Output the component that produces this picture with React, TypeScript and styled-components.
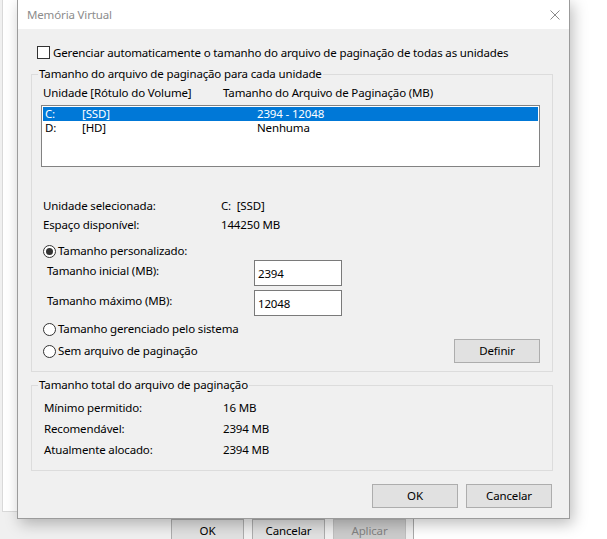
import React from "react";
import styled, { createGlobalStyle } from "styled-components";

const Global = createGlobalStyle`
  html, body { margin: 0; padding: 0; background: #ffffff; overflow: hidden; }
  body {
    font-family: "Noto Sans", "Liberation Sans", sans-serif;
    font-size: 11.5px;
    letter-spacing: -0.15px;
    line-height: 16px;
    color: #000;
  }
  * { box-sizing: border-box; }
`;

const Desktop = styled.div`
  position: relative;
  width: 607px;
  height: 539px;
  overflow: hidden;
  background: #ffffff;
`;

/* ---------- parent window (behind) ---------- */
const ParentWindow = styled.div`
  position: absolute;
  left: 0;
  top: -40px;
  width: 414px;
  height: 620px;
  background: #f0f0f0;
  border-right: 1px solid #a9a9a9;
  display: flex;
  flex-direction: column;
  padding: 0 7px 0 2px;
`;

const TabPanel = styled.div`
  height: 552px;
  background: #ffffff;
  border: 1px solid #d9d9d9;
`;

const ParentButtons = styled.div`
  display: flex;
  justify-content: flex-end;
  gap: 8px;
  margin-top: 7px;
`;

const WinButton = styled.div<{ $w: number; $disabled?: boolean }>`
  width: ${(p) => p.$w}px;
  height: 24px;
  display: flex;
  align-items: center;
  justify-content: center;
  background: ${(p) => (p.$disabled ? "#cccccc" : "#e1e1e1")};
  border: 1px solid ${(p) => (p.$disabled ? "#bfbfbf" : "#adadad")};
  color: ${(p) => (p.$disabled ? "#838383" : "#000")};
`;

/* ---------- dialog ---------- */
const Dialog = styled.div`
  position: absolute;
  left: 17px;
  top: -1px;
  width: 553px;
  border: 1px solid #9b9b9b;
  background: #f0f0f0;
  box-shadow: 3px 5px 14px rgba(0, 0, 0, 0.26);
  display: flex;
  flex-direction: column;
`;

const TitleBar = styled.div`
  height: 29px;
  background: #ffffff;
  display: flex;
  align-items: center;
  justify-content: space-between;
  padding: 0 9px 0 9px;
`;

const TitleText = styled.span`
  color: #8c8c8c;
`;

const Body = styled.div`
  display: flex;
  flex-direction: column;
  padding: 17px 16px 10px 13px;
`;

const CheckRow = styled.div`
  display: flex;
  align-items: center;
  gap: 3px;
  height: 13px;
  padding-left: 6px;
`;

const CheckBox = styled.span`
  width: 13px;
  height: 13px;
  border: 1px solid #333333;
  background: #ffffff;
  flex: none;
`;

const Group = styled.fieldset<{ $top: number; $pl: number; $pt: number; $pb: number }>`
  margin: ${(p) => p.$top}px 0 0 0;
  padding: ${(p) => p.$pt}px 12px ${(p) => p.$pb}px ${(p) => p.$pl}px;
  border: 1px solid #dcdcdc;
  min-width: 0;
`;

const Legend = styled.legend<{ $ml: number }>`
  padding: 0 1px;
  margin-left: ${(p) => p.$ml}px;
  line-height: 16px;
`;

const HeaderRow = styled.div`
  display: grid;
  grid-template-columns: 180px 1fr;
  padding-left: 2px;
  margin-top: 3px;
`;

const ListBox = styled.div`
  margin-top: 4px;
  height: 62px;
  border: 1px solid #828282;
  background: #ffffff;
  padding: 1px;
`;

const ListRow = styled.div<{ $selected?: boolean }>`
  height: 14px;
  line-height: 14px;
  display: grid;
  grid-template-columns: 37px 175px 1fr;
  padding-left: 2px;
  overflow: hidden;
  background: ${(p) => (p.$selected ? "#0078d7" : "transparent")};
  color: ${(p) => (p.$selected ? "#ffffff" : "#000")};
`;

const InfoGrid = styled.div<{ $top: number; $col: number; $gap: number; $pl: number }>`
  display: grid;
  grid-template-columns: ${(p) => p.$col}px 1fr;
  row-gap: ${(p) => p.$gap}px;
  margin-top: ${(p) => p.$top}px;
  padding-left: ${(p) => p.$pl}px;
`;

const RadioRow = styled.div<{ $top: number }>`
  display: flex;
  align-items: center;
  gap: 2px;
  height: 16px;
  margin-top: ${(p) => p.$top}px;
  padding-left: 2px;
`;

const Radio = styled.span<{ $checked?: boolean }>`
  width: 13px;
  height: 13px;
  border: 1px solid #333333;
  border-radius: 50%;
  background: #ffffff;
  flex: none;
  display: flex;
  align-items: center;
  justify-content: center;
  &::after {
    content: "";
    width: 7px;
    height: 7px;
    border-radius: 50%;
    background: ${(p) => (p.$checked ? "#333333" : "transparent")};
  }
`;

const SizeGrid = styled.div`
  display: grid;
  grid-template-columns: 207px 88px;
  grid-auto-rows: 26px;
  row-gap: 4px;
  margin-top: 1px;
  padding-left: 6px;
  align-items: center;
`;

const SizeLabel = styled.span`
  padding-bottom: 4px;
`;

const TextField = styled.input`
  width: 88px;
  height: 26px;
  border: 1px solid #7a7a7a;
  background: #ffffff;
  padding: 0 0 0 3px;
  margin: 0;
  font: inherit;
  letter-spacing: inherit;
  color: #000;
  outline: none;
`;

const LastRow = styled.div`
  display: flex;
  align-items: center;
  justify-content: space-between;
  height: 24px;
  margin-top: 2px;
`;

const ButtonRow = styled.div`
  display: flex;
  justify-content: flex-end;
  gap: 8px;
  margin-top: 13px;
  padding-right: 1px;
`;

const CloseIcon = () => (
  <svg width="10" height="10" viewBox="0 0 10 10">
    <path d="M0.5 0.5 L9.5 9.5 M9.5 0.5 L0.5 9.5" stroke="#8a8a8a" strokeWidth="1" fill="none" />
  </svg>
);

export default function App() {
  return (
    <Desktop>
      <Global />
      <ParentWindow>
        <TabPanel />
        <ParentButtons>
          <WinButton $w={73}>OK</WinButton>
          <WinButton $w={73}>Cancelar</WinButton>
          <WinButton $w={73} $disabled>
            Aplicar
          </WinButton>
        </ParentButtons>
      </ParentWindow>

      <Dialog>
        <TitleBar>
          <TitleText>Memória Virtual</TitleText>
          <CloseIcon />
        </TitleBar>
        <Body>
          <CheckRow>
            <CheckBox />
            <span>Gerenciar automaticamente o tamanho do arquivo de paginação de todas as unidades</span>
          </CheckRow>

          <Group $top={7} $pl={9} $pt={0} $pb={8}>
            <Legend $ml={-3}>Tamanho do arquivo de paginação para cada unidade</Legend>
            <HeaderRow>
              <span>Unidade [Rótulo do Volume]</span>
              <span>Tamanho do Arquivo de Paginação (MB)</span>
            </HeaderRow>
            <ListBox>
              <ListRow $selected>
                <span>C:</span>
                <span>[SSD]</span>
                <span>2394 - 12048</span>
              </ListRow>
              <ListRow>
                <span>D:</span>
                <span>[HD]</span>
                <span>Nenhuma</span>
              </ListRow>
            </ListBox>

            <InfoGrid $top={31} $col={178} $gap={3} $pl={2}>
              <span>Unidade selecionada:</span>
              <span>C:&nbsp; [SSD]</span>
              <span>Espaço disponível:</span>
              <span>144250 MB</span>
            </InfoGrid>

            <RadioRow $top={10}>
              <Radio $checked />
              <span>Tamanho personalizado:</span>
            </RadioRow>

            <SizeGrid>
              <SizeLabel>Tamanho inicial (MB):</SizeLabel>
              <TextField readOnly value="2394" />
              <SizeLabel>Tamanho máximo (MB):</SizeLabel>
              <TextField readOnly value="12048" />
            </SizeGrid>

            <RadioRow $top={5}>
              <Radio />
              <span>Tamanho gerenciado pelo sistema</span>
            </RadioRow>

            <LastRow>
              <RadioRow $top={0}>
                <Radio />
                <span>Sem arquivo de paginação</span>
              </RadioRow>
              <WinButton $w={86}>Definir</WinButton>
            </LastRow>
          </Group>

          <Group $top={5} $pl={12} $pt={7} $pb={12}>
            <Legend $ml={-6}>Tamanho total do arquivo de paginação</Legend>
            <InfoGrid $top={0} $col={179} $gap={5} $pl={0}>
              <span>Mínimo permitido:</span>
              <span>16 MB</span>
              <span>Recomendável:</span>
              <span>2394 MB</span>
              <span>Atualmente alocado:</span>
              <span>2394 MB</span>
            </InfoGrid>
          </Group>

          <ButtonRow>
            <WinButton $w={86}>OK</WinButton>
            <WinButton $w={86}>Cancelar</WinButton>
          </ButtonRow>
        </Body>
      </Dialog>
    </Desktop>
  );
}
